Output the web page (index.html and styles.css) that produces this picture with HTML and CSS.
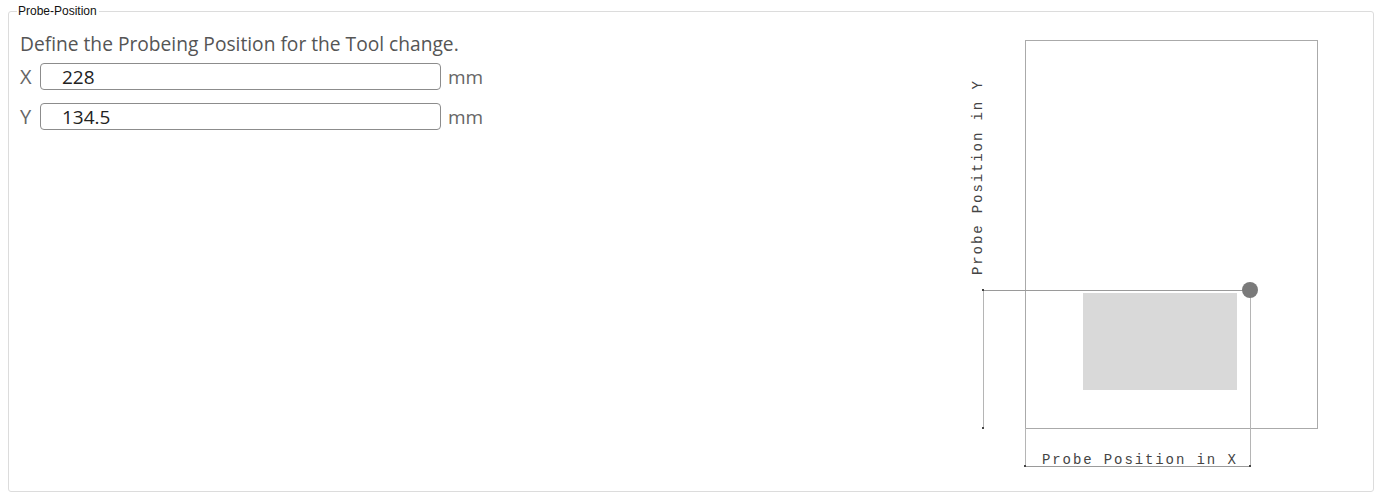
FILE: index.html
```html
<!DOCTYPE html>
<html>
<head>
<meta charset="utf-8">
<link rel="stylesheet" href="styles.css">
</head>
<body>
<fieldset class="panel">
  <legend class="panel-title">Probe-Position</legend>
  <div class="panel-body">
    <div class="form">
      <p class="intro">Define the Probeing Position for the Tool change.</p>
      <div class="row">
        <label class="axis">X</label>
        <input class="field" type="text" value="228">
        <span class="unit">mm</span>
      </div>
      <div class="row">
        <label class="axis">Y</label>
        <input class="field" type="text" value="134.5">
        <span class="unit">mm</span>
      </div>
    </div>
    <svg class="diagram" width="370" height="450" viewBox="960 30 370 450" xmlns="http://www.w3.org/2000/svg">
      <rect x="1025.5" y="40.5" width="292" height="388" fill="none" stroke="#aaaaaa" stroke-width="1"/>
      <rect x="1083" y="293" width="154" height="97" fill="#d9d9d9"/>
      <line x1="983" y1="290.5" x2="1250" y2="290.5" stroke="#9a9a9a" stroke-width="1"/>
      <line x1="983.5" y1="290" x2="983.5" y2="428" stroke="#b5b5b5" stroke-width="1"/>
      <line x1="1025.5" y1="428" x2="1025.5" y2="466" stroke="#b5b5b5" stroke-width="1"/>
      <line x1="1250.5" y1="290" x2="1250.5" y2="466" stroke="#b5b5b5" stroke-width="1"/>
      <line x1="1025" y1="466.5" x2="1250" y2="466.5" stroke="#9a9a9a" stroke-width="1"/>
      <rect x="982" y="289" width="2" height="2" fill="#444"/>
      <rect x="982" y="427" width="2" height="2" fill="#444"/>
      <rect x="1024" y="465" width="2" height="2" fill="#444"/>
      <rect x="1249" y="465" width="2" height="2" fill="#444"/>
      <circle cx="1250" cy="290" r="8" fill="#7a7a7a"/>
      <text class="dim-label" x="1042" y="464">Probe Position in X</text>
      <text class="dim-label" x="0" y="0" transform="translate(982 275) rotate(-90)">Probe Position in Y</text>
    </svg>
  </div>
</fieldset>
</body>
</html>
```

FILE: styles.css
```css
html, body {
  margin: 0;
  padding: 0;
  background: #ffffff;
}

body {
  padding: 4px 8px 0 8px;
  font-family: "Open Sans", "Liberation Sans", sans-serif;
}

.panel {
  margin: 0;
  padding: 0;
  border: 1px solid #dcdcdc;
  border-radius: 3px;
  height: 488px;
  box-sizing: border-box;
}

.panel-title {
  margin-left: 8px;
  padding: 0 2px 0 1px;
  font-family: "Liberation Sans", sans-serif;
  font-size: 12px;
  line-height: 15px;
  color: #111;
}

.panel-body {
  display: flex;
  justify-content: space-between;
}

.form {
  padding: 12px 0 0 11px;
}

.intro {
  margin: 0 0 6px 0;
  font-size: 19.2px;
  line-height: 26px;
  color: #555;
}

.row {
  display: flex;
  align-items: center;
  height: 27px;
  margin-bottom: 13px;
}

.axis {
  width: 20px;
  font-size: 20px;
  color: #666;
}

.field {
  width: 401px;
  height: 27px;
  box-sizing: border-box;
  border: 1px solid #8c8c8c;
  border-radius: 4px;
  padding: 0 0 0 21px;
  font-family: "Open Sans", "Liberation Sans", sans-serif;
  font-size: 19px;
  color: #222;
  background: #fff;
}

.unit {
  margin-left: 7px;
  font-size: 19px;
  color: #666;
}

.diagram {
  display: block;
  margin: 11px 43px 0 0;
}

.dim-label {
  font-family: "Liberation Mono", monospace;
  font-size: 14px;
  letter-spacing: 1.9px;
  fill: #444;
}
```
